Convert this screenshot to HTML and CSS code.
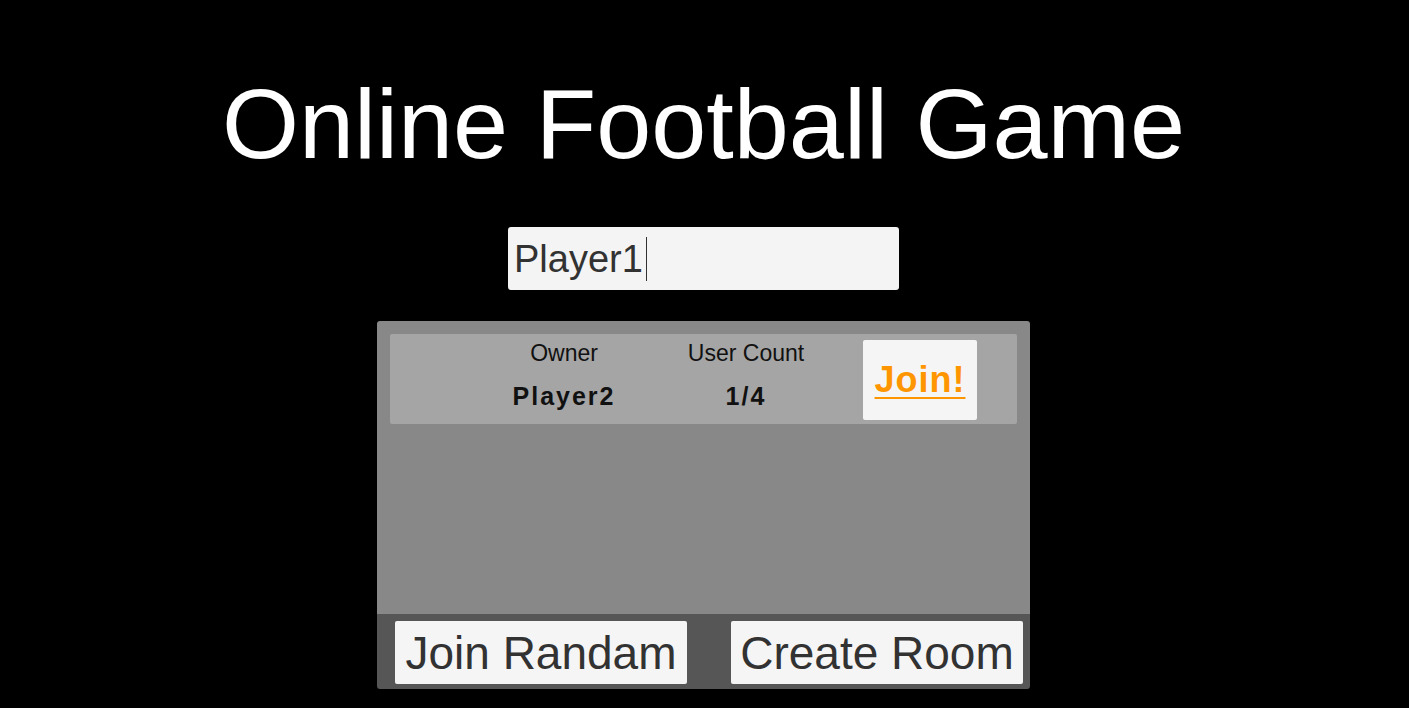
FILE: index.html
```html
<!DOCTYPE html>
<html>
<head>
<meta charset="utf-8">
<link rel="stylesheet" href="styles.css">
</head>
<body>
<main class="screen">
  <h1 class="title">Online Football Game</h1>
  <div class="name-input"><span class="name-text">Player1</span><span class="caret"></span></div>
  <section class="lobby">
    <div class="room-list">
      <div class="room">
        <div class="col col-owner">
          <div class="col-head">Owner</div>
          <div class="col-val">Player2</div>
        </div>
        <div class="col col-count">
          <div class="col-head">User Count</div>
          <div class="col-val">1/4</div>
        </div>
        <div class="join-btn"><span class="join-text">Join!</span></div>
      </div>
    </div>
    <div class="actions">
      <div class="btn">Join Randam</div>
      <div class="btn">Create Room</div>
    </div>
  </section>
</main>
</body>
</html>
```

FILE: styles.css
```css
html, body {
  margin: 0;
  padding: 0;
  background: #000;
  height: 100%;
}
.screen {
  width: 1407px;
  display: flex;
  flex-direction: column;
  align-items: center;
  font-family: "Liberation Sans", Arial, sans-serif;
}
.title {
  margin: 75px 0 0 0;
  font-size: 99px;
  line-height: 98px;
  font-weight: normal;
  color: #fff;
  white-space: nowrap;
}
.name-input {
  margin-top: 54px;
  width: 391px;
  height: 63px;
  box-sizing: border-box;
  background: #f4f4f4;
  border-radius: 3px;
  display: flex;
  align-items: center;
  padding-left: 6px;
}
.name-text {
  font-size: 38px;
  color: #323232;
  line-height: 44px;
}
.caret {
  width: 1px;
  height: 44px;
  background: #323232;
  margin-left: 3px;
}
.lobby {
  margin-top: 31px;
  width: 653px;
  height: 368px;
  border-radius: 3px;
  overflow: hidden;
  display: flex;
  flex-direction: column;
}
.room-list {
  height: 293px;
  background: #888888;
  padding: 13px;
  box-sizing: border-box;
}
.room {
  height: 90px;
  background: #a5a5a5;
  border-radius: 2px;
  display: flex;
  align-items: flex-start;
  box-sizing: border-box;
  padding: 6px 0 0 109px;
}
.col {
  display: flex;
  flex-direction: column;
  align-items: center;
  color: #000;
}
.col-owner {
  width: 130px;
}
.col-count {
  width: 170px;
  margin-left: 32px;
}
.col-head {
  font-size: 23px;
  line-height: 26px;
  color: #111;
}
.col-val {
  margin-top: 16px;
  font-size: 25px;
  line-height: 29px;
  font-weight: bold;
  letter-spacing: 2px;
  color: #111;
}
.join-btn {
  margin-left: 32px;
  width: 114px;
  height: 80px;
  background: #f5f5f5;
  border-radius: 2px;
  display: flex;
  align-items: center;
  justify-content: center;
}
.join-text {
  font-size: 36px;
  font-weight: bold;
  color: #ff9600;
  letter-spacing: 1px;
  text-decoration: underline;
  text-decoration-thickness: 2px;
  text-underline-offset: 5px;
  line-height: 40px;
}
.actions {
  flex: 1;
  background: #565656;
  display: flex;
  justify-content: space-between;
  align-items: flex-start;
  padding: 7px 7px 0 18px;
}
.btn {
  width: 292px;
  height: 63px;
  background: #f5f5f5;
  border-radius: 2px;
  display: flex;
  align-items: center;
  justify-content: center;
  font-size: 46px;
  color: #323232;
}
```
